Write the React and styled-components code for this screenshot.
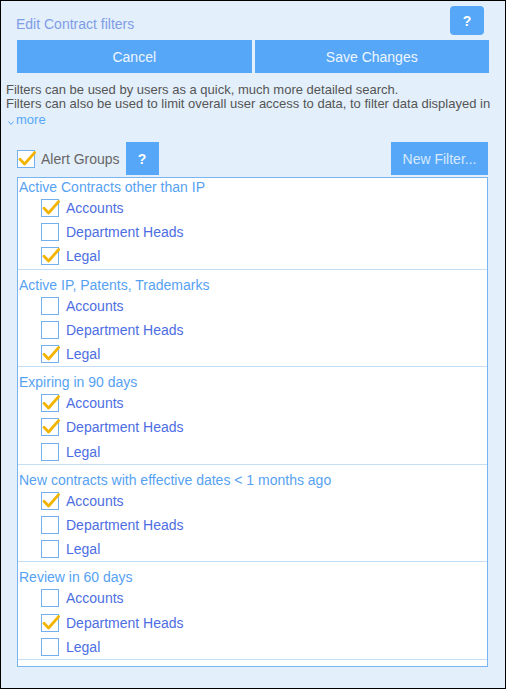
import React from "react";
import styled, { createGlobalStyle } from "styled-components";

const Global = createGlobalStyle`
  html, body { margin: 0; padding: 0; background: #ffffff; }
  body { font-family: "Liberation Sans", Arial, sans-serif; }
  * { box-sizing: border-box; }
`;

const Frame = styled.div`
  width: 506px;
  height: 689px;
  border: 1px solid #000;
  background: #e3effb;
  display: flex;
  flex-direction: column;
  overflow: hidden;
`;

const Header = styled.div`
  display: flex;
  align-items: flex-end;
  justify-content: space-between;
  margin-top: 5px;
  padding: 0 21px 0 15px;
  height: 29px;
`;

const Title = styled.div`
  font-size: 14px;
  line-height: 18px;
  color: #7f9de6;
  margin-bottom: 2px;
`;

const HelpButton = styled.button`
  width: 34px;
  height: 29px;
  border: none;
  border-radius: ${(p) => (p.$rounded ? "4px" : "0")};
  background: #56a7f8;
  color: #ffffff;
  font-family: "Liberation Sans", Arial, sans-serif;
  font-weight: bold;
  font-size: 14px;
  padding: 0;
  display: flex;
  align-items: center;
  justify-content: center;
`;

const SquareHelp = styled(HelpButton)`
  width: 33px;
  height: 33px;
  margin-left: 6px;
`;

const ActionRow = styled.div`
  display: grid;
  grid-template-columns: 1fr 1fr;
  gap: 3px;
  margin-top: 5px;
  padding: 0 16px 0 16px;
`;

const ActionButton = styled.button`
  height: 33px;
  border: none;
  background: #56a7f8;
  color: #eef6ff;
  font-family: "Liberation Sans", Arial, sans-serif;
  font-size: 14px;
  padding: 0;
`;

const Description = styled.div`
  margin-top: 10px;
  padding-left: 5px;
  font-size: 13px;
  line-height: 14px;
  color: #555555;
  white-space: nowrap;
`;

const MoreLink = styled.div`
  margin-top: 2px;
  padding-left: 7px;
  display: flex;
  align-items: center;
  gap: 2px;
  font-size: 13px;
  line-height: 14px;
  color: #56a7f8;
`;

const Chevron = styled.svg`
  margin-top: 5px;
`;

const AlertRow = styled.div`
  display: flex;
  align-items: center;
  margin-top: 15px;
  padding: 0 17px 0 16px;
  height: 33px;
`;

const AlertLabel = styled.span`
  font-size: 14px;
  color: #666666;
  margin-left: 6px;
`;

const NewFilterButton = styled.button`
  margin-left: auto;
  width: 97px;
  height: 33px;
  border: none;
  background: #56a7f8;
  color: #d6eaff;
  font-family: "Liberation Sans", Arial, sans-serif;
  font-size: 14px;
  padding: 0;
`;

const List = styled.div`
  margin: 2px 17px 0 16px;
  border: 1px solid #78b5f0;
  background: #ffffff;
  padding-bottom: 6px;
`;

const Group = styled.div`
  border-bottom: 1px solid #c4def6;
  padding-left: 1px;
  & + & {
    padding-top: 6px;
  }
`;

const GroupTitle = styled.div`
  font-size: 14px;
  line-height: 18px;
  color: #56a2f2;
`;

const Row = styled.div`
  height: 24.2px;
  display: flex;
  align-items: center;
  padding-left: 22px;
`;

const Box = styled.span`
  position: relative;
  flex: none;
  width: 18px;
  height: 18px;
  border: 1px solid #74b0ee;
  background: #ffffff;
`;

const Mark = styled.svg`
  position: absolute;
  left: -1px;
  top: -1px;
  overflow: visible;
`;

const ItemLabel = styled.span`
  margin-left: 7px;
  font-size: 14px;
  color: #4d6ee2;
`;

function Check({ checked }) {
  return (
    <Box>
      {checked && (
        <Mark width="18" height="18" viewBox="0 0 18 18">
          <path
            d="M3 9.2 L7.6 14 L17.6 2.6"
            fill="none"
            stroke="#f2b400"
            strokeWidth="2.8"
            strokeLinecap="round"
            strokeLinejoin="round"
          />
        </Mark>
      )}
    </Box>
  );
}

const groups = [
  { title: "Active Contracts other than IP", checks: [true, false, true] },
  { title: "Active IP, Patents, Trademarks", checks: [false, false, true] },
  { title: "Expiring in 90 days", checks: [true, true, false] },
  { title: "New contracts with effective dates < 1 months ago", checks: [true, false, false] },
  { title: "Review in 60 days", checks: [false, true, false] },
];

const items = ["Accounts", "Department Heads", "Legal"];

export default function App() {
  return (
    <>
      <Global />
      <Frame>
        <Header>
          <Title>Edit Contract filters</Title>
          <HelpButton $rounded>?</HelpButton>
        </Header>
        <ActionRow>
          <ActionButton>Cancel</ActionButton>
          <ActionButton>Save Changes</ActionButton>
        </ActionRow>
        <Description>
          Filters can be used by users as a quick, much more detailed search.
          <br />
          Filters can also be used to limit overall user access to data, to filter data displayed in
        </Description>
        <MoreLink>
          <Chevron width="6" height="4" viewBox="0 0 6 4">
            <path d="M0.5 0.5 L3 3.5 L5.5 0.5" fill="none" stroke="#56a7f8" strokeWidth="1" />
          </Chevron>
          more
        </MoreLink>
        <AlertRow>
          <Check checked />
          <AlertLabel>Alert Groups</AlertLabel>
          <SquareHelp>?</SquareHelp>
          <NewFilterButton>New Filter...</NewFilterButton>
        </AlertRow>
        <List>
          {groups.map((g) => (
            <Group key={g.title}>
              <GroupTitle>{g.title}</GroupTitle>
              {items.map((it, i) => (
                <Row key={it}>
                  <Check checked={g.checks[i]} />
                  <ItemLabel>{it}</ItemLabel>
                </Row>
              ))}
            </Group>
          ))}
        </List>
      </Frame>
    </>
  );
}
